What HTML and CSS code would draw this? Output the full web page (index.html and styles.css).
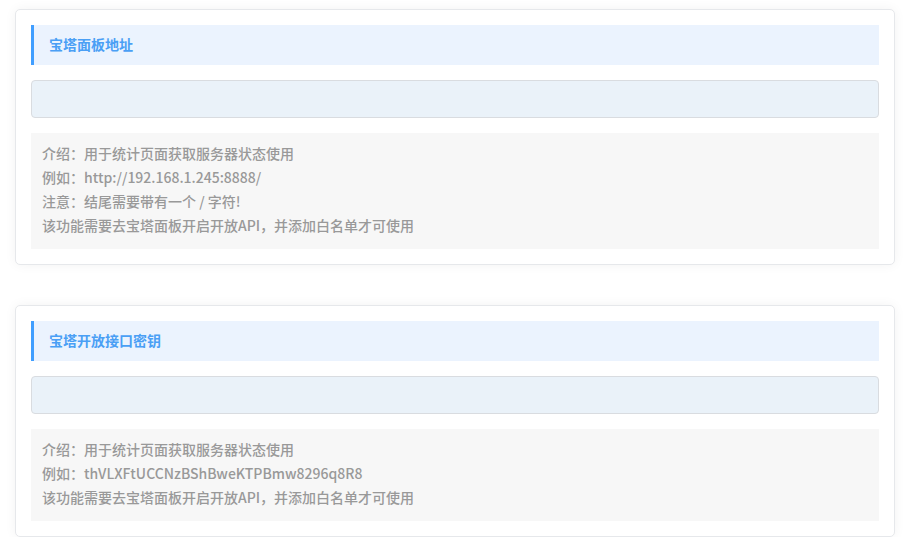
FILE: index.html
```html
<!DOCTYPE html>
<html lang="zh-CN">

<head>
  <meta charset="UTF-8">
  <meta name="viewport" content="width=device-width, initial-scale=1.0">
  <title>宝塔设置</title>
  <link rel="stylesheet" href="styles.css">
</head>

<body>
  <div class="setting-card">
    <div class="setting-title">宝塔面板地址</div>
    <input class="setting-input" type="text">
    <div class="setting-tips">
      <p>介绍：用于统计页面获取服务器状态使用</p>
      <p>例如：http://192.168.1.245:8888/</p>
      <p>注意：结尾需要带有一个 / 字符!</p>
      <p>该功能需要去宝塔面板开启开放API，并添加白名单才可使用</p>
    </div>
  </div>

  <div class="setting-card">
    <div class="setting-title">宝塔开放接口密钥</div>
    <input class="setting-input" type="text">
    <div class="setting-tips">
      <p>介绍：用于统计页面获取服务器状态使用</p>
      <p>例如：thVLXFtUCCNzBShBweKTPBmw8296q8R8</p>
      <p>该功能需要去宝塔面板开启开放API，并添加白名单才可使用</p>
    </div>
  </div>
</body>

</html>
```

FILE: styles.css
```css
body {
  font-family: "Noto Sans CJK SC", "Noto Sans", sans-serif;
  margin: 0;
  padding: 9px 13px 0 15px;
  background-color: #fff;
}

.setting-card {
  background: #fff;
  border: 1px solid #e6e8eb;
  border-radius: 5px;
  box-shadow: 0 0 12px rgba(0, 0, 0, 0.05);
  padding: 15px;
  margin-bottom: 40px;
}

.setting-card:last-child {
  margin-bottom: 0;
}

.setting-title {
  height: 40px;
  line-height: 38px;
  background-color: #ebf3fe;
  border-left: 3px solid #409eff;
  padding-left: 15px;
  color: #4a9ff5;
  font-size: 14px;
  font-weight: bold;
}

.setting-input {
  display: block;
  box-sizing: border-box;
  width: 100%;
  height: 38px;
  margin: 15px 0;
  background-color: #eaf2f9;
  border: 1px solid #d9dce0;
  border-radius: 4px;
  outline: none;
}

.setting-tips {
  background-color: #f7f7f7;
  padding: 8px 11px 12px;
  color: #999;
  font-size: 14px;
  font-weight: 500;
}

.setting-tips p {
  margin: 0;
  line-height: 24px;
}
```
